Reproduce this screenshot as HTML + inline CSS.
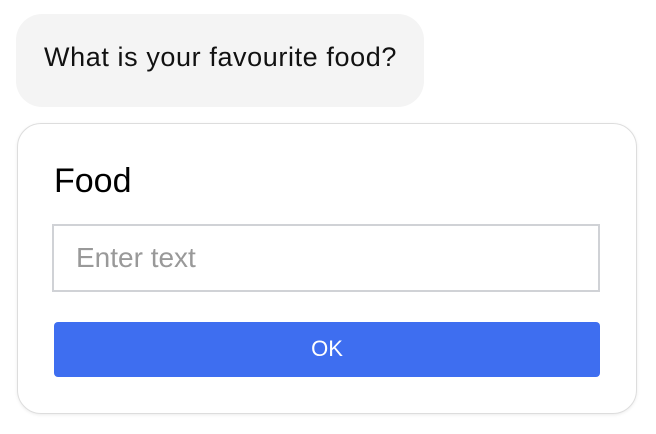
<!DOCTYPE html>
<html><head><style>
body{margin:0;width:656px;height:434px;background:#fff;font-family:"Liberation Sans",sans-serif;position:relative;overflow:hidden}
.b{position:absolute;left:16px;top:14px;width:408px;height:93px;background:#f4f4f4;border-radius:26px}
.b span{position:absolute;left:28px;top:28px;font-size:27px;color:#111;letter-spacing:0.6px;white-space:nowrap}
.c{position:absolute;left:17px;top:123px;width:618px;height:289px;border:1.5px solid #ddd;border-radius:24px;box-shadow:0 1px 3px rgba(0,0,0,.08)}
.f{position:absolute;left:54px;top:162px;font-size:34px;color:#000;letter-spacing:0px}
.i{position:absolute;left:52px;top:224px;width:544px;height:64px;border:2px solid #d0d2d6}
.i span{position:absolute;left:22px;top:16px;font-size:28px;color:#999;letter-spacing:0px}
.k{position:absolute;left:54px;top:322px;width:546px;height:55px;background:#3e6ef0;border-radius:4px;color:#fff;font-size:22px;text-align:center;line-height:53px}
</style></head><body>
<div class="b"><span>What is your favourite food?</span></div>
<div class="c"></div>
<div class="f">Food</div>
<div class="i"><span>Enter text</span></div>
<div class="k">OK</div>
</body></html>
